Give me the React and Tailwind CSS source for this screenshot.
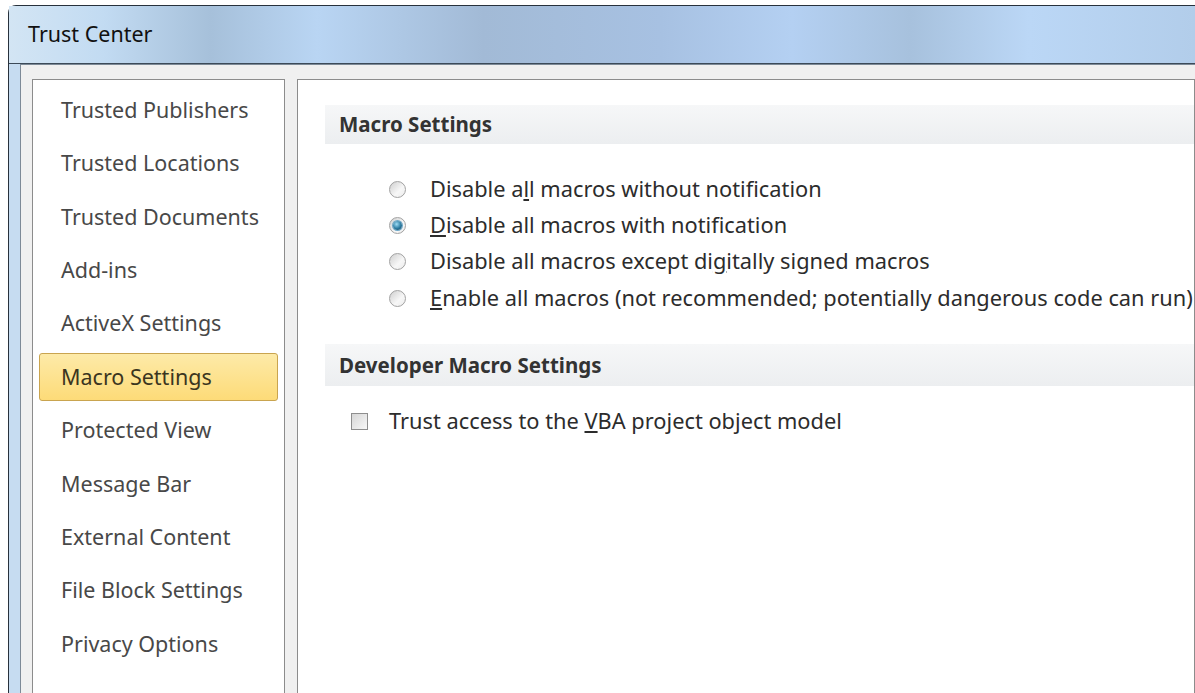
import React from 'react';

const navItems = [
  'Trusted Publishers',
  'Trusted Locations',
  'Trusted Documents',
  'Add-ins',
  'ActiveX Settings',
  'Macro Settings',
  'Protected View',
  'Message Bar',
  'External Content',
  'File Block Settings',
  'Privacy Options',
];

const Radio = ({ checked }) => (
  <span className="relative flex h-[17px] w-[17px] shrink-0 items-center justify-center rounded-full border border-[#a2a2a2] bg-[linear-gradient(135deg,#cfcfcf,#f7f7f7_60%,#ececec)]">
    {checked && (
      <span className="h-[9px] w-[9px] rounded-full bg-[radial-gradient(circle_at_40%_35%,#9fdcf5,#2a7aa0_55%,#143f58)] shadow-[0_0_0_1px_#6fa8c8]" />
    )}
  </span>
);

const SectionHeader = ({ children, tall }) => (
  <div
    className={
      tall
        ? 'ml-[27px] flex h-[42px] items-center bg-[linear-gradient(180deg,#f6f7f8,#eceef0)] pl-[14px] text-[20.5px] font-bold text-[#333]'
        : 'ml-[27px] flex h-[39px] items-center bg-[linear-gradient(180deg,#f6f7f8,#eceef0)] pl-[14px] text-[20.5px] font-bold text-[#333]'
    }
  >
    {children}
  </div>
);

const Option = ({ checked, children }) => (
  <div className="flex h-[36.3px] items-center">
    <span className="ml-[91px] mr-[24px]">
      <Radio checked={checked} />
    </span>
    <span className="text-[21.8px] text-[#2c2c2c]">{children}</span>
  </div>
);

export default function App() {
  return (
    <div
      className="h-[693px] w-[1195px] overflow-hidden bg-white pl-[8px] pt-[5px]"
      style={{ fontFamily: '"Noto Sans", "Open Sans", sans-serif' }}
    >
      <div className="flex h-[700px] flex-col rounded-tl-[8px] border-l border-t border-[#27313c] bg-[#c6dcf1]">
        {/* title bar */}
        <div className="flex h-[58px] items-center border-b border-[#3c4a58] bg-[linear-gradient(90deg,#d3e5f4_0%,#c2dbf2_8%,#a6c0da_17%,#b9d5f3_26%,#a2bad6_40%,#a7c1e2_55%,#b4d0f2_66%,#a7c1dd_76%,#bbd7f6_86%,#b2cdea_100%)] pl-[19px] text-[21.5px] text-[#111]">
          Trust Center
        </div>

        {/* client area */}
        <div className="flex flex-1 pl-[11px]">
          <div className="flex flex-1 gap-[12px] border-l border-t border-[#7d8a97] bg-[#f0f0f0] pl-[11px] pt-[14px]">
            {/* left nav */}
            <div className="w-[253px] shrink-0 border border-[#8c8c8c] bg-white pt-[6px]">
              <div className="flex flex-col gap-[5.4px] px-[6px]">
                {navItems.map((item) =>
                  item === 'Macro Settings' ? (
                    <div
                      key={item}
                      className="flex h-[48px] items-center rounded-[3px] border border-[#c9a44f] bg-[linear-gradient(180deg,#fdeaa8,#fddb78)] pl-[21px] text-[21.5px] text-[#3b3520]"
                    >
                      {item}
                    </div>
                  ) : (
                    <div key={item} className="flex h-[48px] items-center pl-[22px] text-[21.5px] text-[#484848]">
                      {item}
                    </div>
                  )
                )}
              </div>
            </div>

            {/* settings panel */}
            <div className="flex-1 border border-[#8c8c8c] bg-white pt-[25px]">
              <SectionHeader>Macro Settings</SectionHeader>
              <div className="pb-[28px] pt-[27px]">
                <Option>
                  Disable a<u>l</u>l macros without notification
                </Option>
                <Option checked>
                  <u>D</u>isable all macros with notification
                </Option>
                <Option>
                  Disable all macros except di<u>g</u>itally signed macros
                </Option>
                <Option>
                  <u>E</u>nable all macros (not recommended; potentially dangerous code can run)
                </Option>
              </div>
              <SectionHeader tall>Developer Macro Settings</SectionHeader>
              <div className="flex h-[70px] items-center">
                <span className="ml-[53px] mr-[21px] h-[17px] w-[17px] border border-[#8e8e8e] bg-[linear-gradient(135deg,#d6d6d6,#f8f8f8)]" />
                <span className="text-[21.8px] text-[#2c2c2c]">
                  Trust access to the <u>V</u>BA project object model
                </span>
              </div>
            </div>
          </div>
        </div>
      </div>
    </div>
  );
}
